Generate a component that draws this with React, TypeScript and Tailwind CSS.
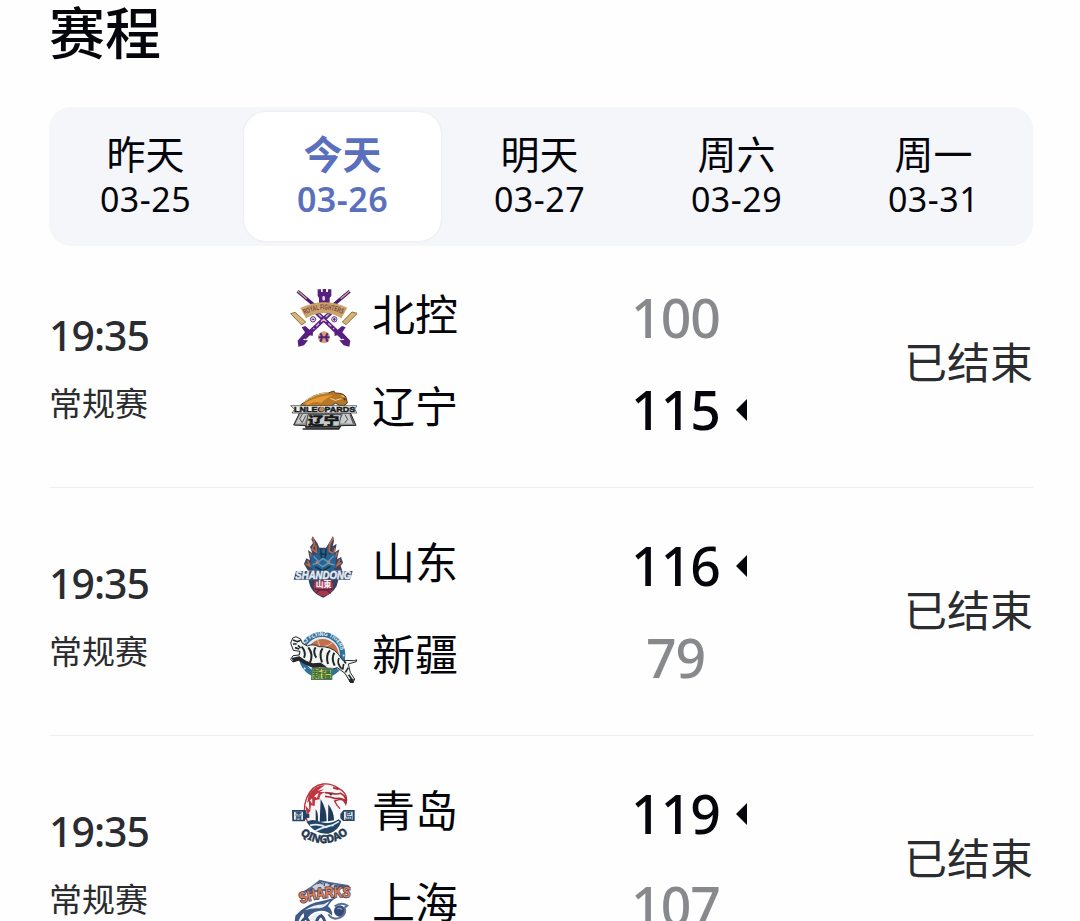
import React from 'react';

type LogoProps = { className?: string };

const RoyalFightersLogo: React.FC<LogoProps> = ({ className }) => (
  <svg viewBox="27 12 204 204" className={className}>
    {/* Crossed swords */}
    <g fill="none" strokeLinecap="butt">
      <path d="M53 34 L108 80 M209 34 L154 80" stroke="#4b1d78" strokeWidth="10" />
      <path d="M53 33 L80 56 M209 33 L182 56" stroke="#c9a27a" strokeWidth="4" />
      <path d="M110 98 L190 174 M152 98 L72 174" stroke="#5a2389" strokeWidth="13" />
      <path d="M116 103 L162 147 M146 103 L100 147" stroke="#d9b8c4" strokeWidth="4" strokeDasharray="12 8" />
    </g>
    <g fill="#57207f">
      <path d="M54 179 L68 181 L86 164 L98 168 L99 158 L76 138 L65 142 L75 157 L53 182 L55 200 L72 196 L84 181 Z" />
      <path d="M208 179 L194 181 L176 164 L164 168 L163 158 L186 138 L197 142 L187 157 L211 182 L208 200 L191 196 L178 181 Z" />
      <path d="M113 28 h10 v8 h5 v-9 h10 v9 h6 v-8 h10 v20 l-5 5 v19 h-32 v-19 l-4 -5 Z" />
    </g>
    <rect x="127" y="48" width="8" height="14" rx="4" fill="#e5cddd" />
    {/* Scroll banner */}
    <path d="M32 101 L46 97 L77 126 L65 135 Z M232 100 L216 96 L187 126 L198 134 Z" fill="#d5b477" stroke="#8f7147" strokeWidth="3" />
    <path d="M61 84 Q131 50 202 83 L184 115 Q132 83 78 115 Z" fill="#cda467" />
    <path id="royal-arc" d="M74 104 Q131 73 190 104" fill="none" />
    <text fontSize="23" fontWeight="700" fill="#76454e" fontFamily="Liberation Sans, sans-serif">
      <textPath href="#royal-arc" textLength="118" lengthAdjust="spacingAndGlyphs">ROYAL FIGHTERS</textPath>
    </text>
    <g fill="#e3d2e2" stroke="#654080" strokeWidth="3">
      <circle cx="99" cy="118" r="8" />
      <circle cx="163" cy="118" r="8" />
    </g>
    <path d="M95 118 h8 M163 113 v10 M159 118 h8" stroke="#57207f" strokeWidth="3" />
    <circle cx="132" cy="172" r="18" fill="#d0a078" />
    <path d="M121 160 Q130 171 121 185 M143 160 Q134 171 143 185 M116 172 h32" fill="none" stroke="#551f7c" strokeWidth="6" />
  </svg>
);

const LeopardsLogo: React.FC<LogoProps> = ({ className }) => (
  <svg viewBox="27 3 204 204" className={className}>
    <path d="M62 90 Q100 53 147 53 L161 48 L166 54 Q196 54 199 70 L202 84 L189 94 L166 85 L147 96 L75 97 Z" fill="#b67827" stroke="#4c3a23" strokeWidth="3" />
    <path d="M74 85 Q116 60 159 61 Q136 70 124 84 Q101 76 84 90 Z" fill="#e59a34" />
    <path d="M70 82 Q105 55 146 53 M151 70 L166 76 L184 71 M184 62 L193 65" fill="none" stroke="#eed59c" strokeWidth="3" />
    <path d="M189 70 l9 1 -4 6 Z" fill="#392d25" />
    <path d="M59 113 L211 113 L228 151 L181 152 L176 160 L78 159 L76 152 L41 150 Z" fill="#8b8b8a" stroke="#202326" strokeWidth="3" />
    <path d="M62 116 L47 146 L73 145 L84 118 Z M190 116 L175 145 L219 147 L207 117 Z" fill="#c9caca" />
    <path d="M68 116 l-9 15 8 13 M195 119 l8 14 -9 11 M78 121 l-11 21 M211 120 l9 26" stroke="#4b4e4f" strokeWidth="3" fill="none" />
    <path d="M32 92 H232 L224 102 L231 114 H36 L44 103 Z" fill="#eeeeeb" stroke="#30302f" strokeWidth="2" />
    <text x="42" y="111" fontSize="24" fontWeight="700" fill="#181b1e" stroke="#181b1e" strokeWidth="1.5" textLength="184" lengthAdjust="spacingAndGlyphs" fontFamily="Liberation Sans, sans-serif">LNLEOPARDS</text>
    <circle cx="125" cy="103" r="7" fill="#bf8752" />
    <path d="M84 119 H184 L176 156 H78 Z" fill="#c8c9c7" stroke="#202326" strokeWidth="2" />
    <text x="84" y="150" fontSize="34" fontWeight="900" fill="#15181b" stroke="#15181b" strokeWidth="1.5" textLength="94" lengthAdjust="spacingAndGlyphs" fontFamily="Noto Sans CJK SC, sans-serif">辽宁</text>
    <path d="M76 154 H181 L176 162 H68" fill="none" stroke="#242728" strokeWidth="4" />
  </svg>
);

const ShandongLogo: React.FC<LogoProps> = ({ className }) => (
  <svg viewBox="27 21 204 204" className={className}>
    {/* Dragon mane and horns */}
    <path d="M84 137 L72 117 L79 100 L90 106 L84 75 L97 85 L90 66 L99 54 L94 43 L98 34 L112 54 L118 68 H138 L147 54 L159 33 L162 48 L158 64 L170 56 L165 82 L178 73 L171 103 L183 96 L189 113 L182 122 L187 137 Z" fill="#3e4260" />
    <path d="M98 37 L104 57 L96 72 L109 82 L108 61 M160 38 L149 58 L147 78 L160 87 L165 69 M83 107 L91 124 L77 116 M180 103 L171 121 L184 113 M90 84 L97 100 M172 82 L165 98" fill="none" stroke="#b96a45" strokeWidth="5" />
    <path d="M94 86 L111 90 L115 67 L128 76 L143 65 L147 89 L166 82 L168 127 L145 146 L119 145 L92 130 Z" fill="#256390" />
    <path d="M101 94 L116 110 L128 101 L144 110 L161 93 M98 119 L112 114 L128 125 L144 115 L164 120" fill="none" stroke="#6f94bd" strokeWidth="4" />
    <path d="M121 71 L125 99 M139 71 L135 99 M106 125 L128 138 L151 124 M118 87 L140 88" fill="none" stroke="#18344f" strokeWidth="5" />
    <path d="M107 107 l12 5 -11 5 Z M151 107 l-12 5 11 5 Z" fill="#c48366" />
    <path d="M86 165 L175 165 Q170 201 130 218 Q90 203 86 165 Z" fill="#35405e" />
    <circle cx="130" cy="184" r="29" fill="#ae344c" />
    <path d="M108 204 Q130 182 152 205 M104 192 Q130 198 156 192" fill="none" stroke="#552843" strokeWidth="4" />
    <path d="M48 138 H218 L210 164 H174 L165 168 H93 L86 164 H41 Z" fill="#354b6e" />
    <text x="46" y="161" fontSize="30" fontWeight="700" fontStyle="italic" fill="#e4ebf0" stroke="#e4ebf0" strokeWidth="1.5" textLength="168" lengthAdjust="spacingAndGlyphs" fontFamily="Liberation Sans, sans-serif">SHANDONG</text>
    <text x="107" y="187" fontSize="23" fontWeight="900" fill="#f0edf1" textLength="47" lengthAdjust="spacingAndGlyphs" fontFamily="Noto Sans CJK SC, sans-serif">山東</text>
  </svg>
);

const FlyingTigersLogo: React.FC<LogoProps> = ({ className }) => (
  <svg viewBox="27 12 204 204" className={className}>
    <circle cx="126" cy="105" r="62" fill="#e9edf0" stroke="#2f719c" strokeWidth="16" />
    <circle cx="128" cy="105" r="48" fill="#c26f4c" />
    <path d="M90 77 Q136 86 171 126 M112 58 Q128 92 119 144 M157 68 Q134 87 94 80" fill="none" stroke="#eec6a5" strokeWidth="3" />
    <path id="tiger-arc" d="M74 76 Q90 49 126 48 Q168 46 182 90" fill="none" />
    <text fontSize="17" fontWeight="700" fill="#f0f6f5" fontFamily="Liberation Sans, sans-serif">
      <textPath href="#tiger-arc" textLength="140" lengthAdjust="spacingAndGlyphs">XJ FLYING TIGERS</textPath>
    </text>
    <path d="M190 104 l2 5 M187 124 l-3 5 M177 144 l-4 4 M72 143 l4 5" stroke="#ccecf0" strokeWidth="5" />
    {/* Tiger leaping through the ring */}
    <path d="M32 69 L38 54 L48 50 L62 57 L67 70 L82 78 Q99 70 116 80 Q154 78 174 101 L188 121 L224 122 L230 119 L229 125 L205 132 L211 158 L224 177 L219 188 L211 187 L195 160 L172 143 L151 149 L124 136 L98 140 L78 131 L56 119 L39 126 L32 118 L39 107 L58 105 L60 94 L40 91 Z" fill="#f4f4f1" stroke="#252b2d" strokeWidth="3" />
    <g fill="none" stroke="#1d272b" strokeWidth="5">
      <path d="M39 60 l13 5 10 -4 M39 72 l11 0 M54 76 l8 8 M45 83 l13 4" />
      <path d="M65 80 Q80 98 72 113 M85 82 Q101 103 90 128 M107 82 Q97 95 109 113 M128 85 Q116 99 126 127 M150 91 Q136 105 144 132 M163 98 Q153 114 164 137" strokeWidth="6" />
      <path d="M177 114 Q169 131 186 147 M191 132 l-3 17 M205 143 l-9 14 M206 164 l10 15 M192 123 l6 7" />
    </g>
    {/* Shaded belly and paws */}
    <path d="M35 114 L58 109 L78 122 L98 130 L122 128 L140 140 L124 141 L98 143 L76 134 L56 122 L40 127 Z M206 178 L221 176 L220 189 L210 188 Z" fill="#22292c" />
    <path d="M97 145 H155 V178 H95 Z" fill="#d8cd55" stroke="#49796c" strokeWidth="4" />
    <text x="97" y="174" fontSize="32" fontWeight="900" fill="#3b703b" textLength="56" lengthAdjust="spacingAndGlyphs" fontFamily="Noto Sans CJK SC, sans-serif">新疆</text>
  </svg>
);

const QingdaoLogo: React.FC<LogoProps> = ({ className }) => (
  <svg viewBox="27 15 204 204" className={className}>
    <path d="M83 141 C59 97 83 33 129 27 Q153 24 176 40 Q199 52 200 74 L197 87 Q191 73 179 73 L164 78 Q169 91 180 101" fill="#f8f5f5" stroke="#b82d39" strokeWidth="4" />
    <path d="M81 121 L76 91 L88 105 L86 71 L97 86 L96 60 L111 69 L117 50 L138 51 Q117 55 119 73 L105 76 L104 93 L93 91 L91 108 Z M86 59 Q105 31 135 30 L112 47 L132 43 L109 58 L82 83 Z" fill="#bf3640" />
    <path d="M135 53 L157 55 Q170 59 182 55 L191 61 Q198 67 198 80 Q186 66 166 71 L150 66 L135 64 M159 38 L176 43" fill="none" stroke="#a92e37" strokeWidth="5" />
    <path d="M144 55 l14 2 -5 5 Z" fill="#273346" />
    <path d="M107 138 L107 103 Q115 109 114 140 Z M119 141 L122 72 Q141 103 140 139 Z M144 139 L145 88 Q163 112 162 136 Z" fill="#1f3b5c" />
    <path d="M80 142 Q95 129 121 141 Q151 150 176 133 L184 139 Q174 170 145 176 Q106 180 80 142 Z" fill="#214567" />
    <path d="M90 151 Q119 145 139 157 Q163 149 177 139 M106 168 Q139 151 161 151" fill="none" stroke="#e4edf2" strokeWidth="5" />
    <path d="M36 105 H77 L80 116 H88 V129 H79 L74 139 H37 Z M181 116 L191 105 H224 V138 H189 L181 130 Z" fill="#244365" />
    <path d="M42 110 H69 V134 H42 Z M192 110 H218 V134 H192 Z" fill="#e0e7ec" />
    <text x="44" y="131" fontSize="23" fontWeight="700" fill="#264565" fontFamily="Noto Sans CJK SC, sans-serif">青</text>
    <text x="194" y="131" fontSize="23" fontWeight="700" fill="#264565" fontFamily="Noto Sans CJK SC, sans-serif">岛</text>
    <path id="qingdao-arc" d="M60 178 Q132 232 206 176" fill="none" />
    <text fontSize="33" fontWeight="700" fill="#26394f" stroke="#26394f" strokeWidth="1.5" fontFamily="Noto Sans, sans-serif">
      <textPath href="#qingdao-arc" textLength="158" lengthAdjust="spacingAndGlyphs">QINGDAO</textPath>
    </text>
  </svg>
);

const SharksLogo: React.FC<LogoProps> = ({ className }) => (
  <svg viewBox="27 21 204 204" className={className}>
    <path d="M65 82 L92 65 L119 44 L145 50 L205 60 L213 69 L160 74 L92 84 Z" fill="#56698e" />
    <path d="M97 65 L119 51 L146 56 L198 64 L163 68 L101 76 Z" fill="#cbd0db" />
    <path d="M112 57 l8 -5 8 6 M133 54 v9 M145 56 l11 2 -8 6 M163 63 h31" fill="none" stroke="#38547c" strokeWidth="4" />
    <path id="shark-arc" d="M63 116 Q130 90 214 98" fill="none" />
    <text fontSize="45" fontWeight="700" fill="#dc7f56" stroke="#4a3f58" strokeWidth="5" paintOrder="stroke" fontFamily="Liberation Sans, sans-serif">
      <textPath href="#shark-arc" textLength="150" lengthAdjust="spacingAndGlyphs">SHARKS</textPath>
    </text>
    {/* Shark body and ball */}
    <path d="M46 152 Q84 112 126 108 L174 96 Q152 106 144 124 Q158 134 156 152 Q140 134 117 138 Q90 142 80 166 Q70 160 72 144 Q62 150 56 168 L44 174 Z" fill="#405b88" />
    <path d="M74 136 Q100 118 131 118 L149 108 Q138 127 119 130 Q96 128 74 136 Z" fill="#e8edf3" />
    <path d="M84 166 Q104 140 132 143 Q112 150 104 172 Q94 160 84 166 Z" fill="#e9edf2" />
    <path d="M60 176 L78 156 L90 176 M108 176 Q112 156 124 152 Q134 160 136 178" fill="none" stroke="#38507c" strokeWidth="9" />
    <circle cx="179" cy="138" r="17" fill="#344b79" />
    <path d="M145 148 Q157 167 180 158 Q200 148 194 128 L202 122 Q184 110 164 124" fill="none" stroke="#5c6f98" strokeWidth="6" />
    <path d="M172 132 q8 -6 14 2" fill="none" stroke="#8ea0c0" strokeWidth="4" />
  </svg>
);

interface Team {
  name: string;
  score: number;
  Logo: React.FC<LogoProps>;
}

interface Match {
  time: string;
  stage: string;
  status: string;
  teams: [Team, Team];
}

const days = [
  { label: '昨天', date: '03-25' },
  { label: '今天', date: '03-26', active: true },
  { label: '明天', date: '03-27' },
  { label: '周六', date: '03-29' },
  { label: '周一', date: '03-31' },
];

const matches: Match[] = [
  {
    time: '19:35',
    stage: '常规赛',
    status: '已结束',
    teams: [
      { name: '北控', score: 100, Logo: RoyalFightersLogo },
      { name: '辽宁', score: 115, Logo: LeopardsLogo },
    ],
  },
  {
    time: '19:35',
    stage: '常规赛',
    status: '已结束',
    teams: [
      { name: '山东', score: 116, Logo: ShandongLogo },
      { name: '新疆', score: 79, Logo: FlyingTigersLogo },
    ],
  },
  {
    time: '19:35',
    stage: '常规赛',
    status: '已结束',
    teams: [
      { name: '青岛', score: 119, Logo: QingdaoLogo },
      { name: '上海', score: 107, Logo: SharksLogo },
    ],
  },
];

const TeamLine: React.FC<{ team: Team; winner: boolean }> = ({ team, winner }) => {
  const { Logo, name, score } = team;
  return (
    <div className="flex h-[68px] items-center">
      <Logo className="h-[68px] w-[68px] shrink-0" />
      <span className="ml-[15px] w-[244px] pb-1.5 text-[43px] leading-[60px] text-[#05060c]">{name}</span>
      <span
        className={`w-[119px] text-center text-[53.5px] leading-[60px] font-medium tracking-[-1px] ${winner ? 'text-[#05060c]' : 'text-[#88898d]'}`}
      >
        {score}
      </span>
      {winner && (
        <svg viewBox="0 0 11 22" className="ml-px h-[22px] w-[11px]">
          <path d="M11 0 V22 L0 11 Z" fill="#05060c" />
        </svg>
      )}
    </div>
  );
};

const MatchRow: React.FC<{ match: Match }> = ({ match }) => {
  const [home, away] = match.teams;
  return (
    <div className="flex h-[248px] shrink-0 border-b border-[#eeeff1] text-[#2b2c2f]">
      <div className="w-[240px] pt-[65px]">
        <div className="text-[41px] leading-[60px] font-medium tracking-[-1px]">{match.time}</div>
        <div className="mt-[9px] text-[33px] leading-[60px]">{match.stage}</div>
      </div>
      <div className="flex flex-col gap-6 pt-11">
        <TeamLine team={home} winner={home.score > away.score} />
        <TeamLine team={away} winner={away.score > home.score} />
      </div>
      <div className="ml-auto pt-[93px] text-[43px] leading-[60px]">{match.status}</div>
    </div>
  );
};

export default function App() {
  return (
    <div className="flex h-[921px] w-[1080px] flex-col overflow-hidden bg-[#fefefe] pr-[47px] pl-[49px] font-['Noto_Sans','Noto_Sans_CJK_SC',sans-serif]">
      <h1 className="h-[107px] shrink-0 text-[56px] leading-[64px] font-medium text-[#05060c]">赛程</h1>
      <div className="flex h-[139px] shrink-0 items-center rounded-[22px] bg-[#f5f6fa]">
        <div className="-ml-0.5 flex">
          {days.map((day) => (
            <button
              key={day.date}
              className={`flex h-[129px] w-[197px] shrink-0 flex-col items-center justify-center rounded-[22px] ${
                day.active ? 'bg-white font-semibold text-[#5a70bd] shadow-[0_0_3px_rgba(0,0,0,0.08)]' : 'text-[#05060c]'
              }`}
            >
              <span className="text-[39px] leading-[44px]">{day.label}</span>
              <span className="text-[34px] leading-[46px] tracking-[0.5px]">{day.date}</span>
            </button>
          ))}
        </div>
      </div>
      <div className="-mt-1.5 flex flex-col">
        {matches.map((match) => (
          <MatchRow key={match.teams[0].name} match={match} />
        ))}
      </div>
    </div>
  );
}
